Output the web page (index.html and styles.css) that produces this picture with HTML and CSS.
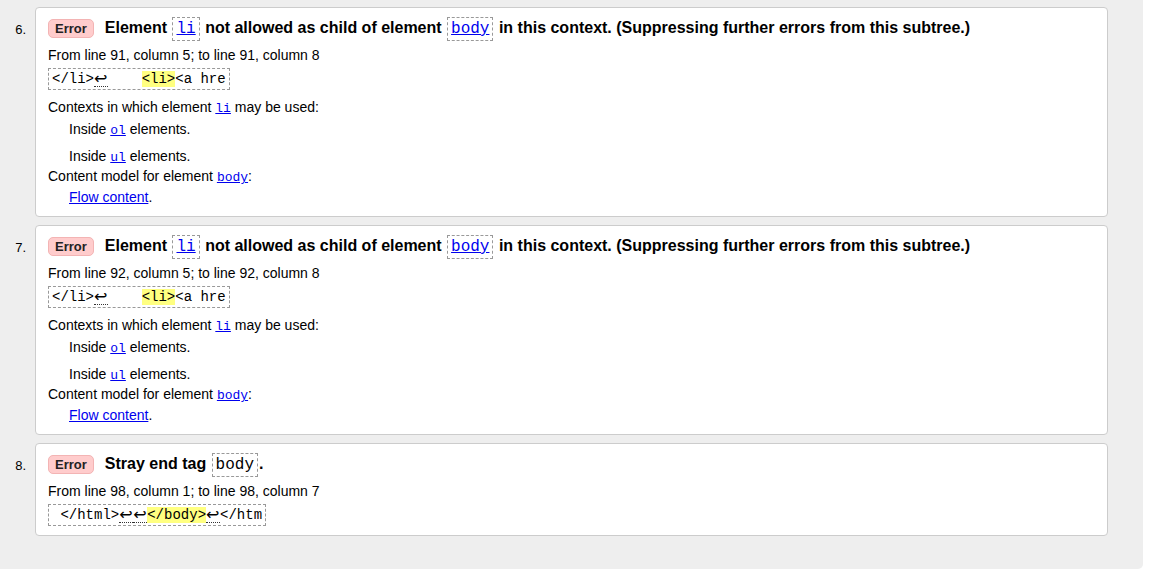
FILE: index.html
```html
<!DOCTYPE html>
<html lang="en">
<head>
<meta charset="utf-8">
<title>Validation messages</title>
<link rel="stylesheet" href="styles.css">
</head>
<body>
<div class="page">
  <ol class="messages">
    <li class="msg">
      <span class="num">6.</span>
      <div class="card">
        <p class="title"><strong class="badge">Error</strong><span class="desc">Element <code class="tag"><a href="#">li</a></code> not allowed as child of element <code class="tag"><a href="#">body</a></code> in this context. (Suppressing further errors from this subtree.)</span></p>
        <p class="loc">From line 91, column 5; to line 91, column 8</p>
        <p class="extract"><code>&lt;/li&gt;<b class="lf">↩</b>    <mark>&lt;li&gt;</mark>&lt;a hre</code></p>
        <dl class="ctx">
          <dt>Contexts in which element <a href="#"><code>li</code></a> may be used:</dt>
          <dd class="d1">Inside <a href="#"><code>ol</code></a> elements.</dd>
          <dd class="d2">Inside <a href="#"><code>ul</code></a> elements.</dd>
          <dt class="t2">Content model for element <a href="#"><code>body</code></a>:</dt>
          <dd class="d3"><a href="#">Flow content</a>.</dd>
        </dl>
      </div>
    </li>
    <li class="msg">
      <span class="num">7.</span>
      <div class="card">
        <p class="title"><strong class="badge">Error</strong><span class="desc">Element <code class="tag"><a href="#">li</a></code> not allowed as child of element <code class="tag"><a href="#">body</a></code> in this context. (Suppressing further errors from this subtree.)</span></p>
        <p class="loc">From line 92, column 5; to line 92, column 8</p>
        <p class="extract"><code>&lt;/li&gt;<b class="lf">↩</b>    <mark>&lt;li&gt;</mark>&lt;a hre</code></p>
        <dl class="ctx">
          <dt>Contexts in which element <a href="#"><code>li</code></a> may be used:</dt>
          <dd class="d1">Inside <a href="#"><code>ol</code></a> elements.</dd>
          <dd class="d2">Inside <a href="#"><code>ul</code></a> elements.</dd>
          <dt class="t2">Content model for element <a href="#"><code>body</code></a>:</dt>
          <dd class="d3"><a href="#">Flow content</a>.</dd>
        </dl>
      </div>
    </li>
    <li class="msg">
      <span class="num">8.</span>
      <div class="card">
        <p class="title"><strong class="badge">Error</strong><span class="desc">Stray end tag <code class="tag">body</code>.</span></p>
        <p class="loc">From line 98, column 1; to line 98, column 7</p>
        <p class="extract last"><code> &lt;/html&gt;<b class="lf">↩</b><b class="lf">↩</b><mark>&lt;/body&gt;</mark><b class="lf">↩</b>&lt;/htm</code></p>
      </div>
    </li>
  </ol>
</div>
</body>
</html>
```
FILE: styles.css
```css
* { box-sizing: border-box; }
html, body { margin: 0; padding: 0; background: #fff; }
body {
  font-family: "Liberation Sans", Arial, Helvetica, sans-serif;
  font-size: 14px;
  color: #000;
}
a { color: #0000ee; }
.page {
  width: 1143px;
  height: 569px;
  background: #eee;
  border-bottom-right-radius: 5px;
  padding: 7px 35px 0 0;
}
.messages {
  list-style: none;
  margin: 0;
  padding: 0;
  display: flex;
  flex-direction: column;
  gap: 8px;
}
.msg { display: flex; align-items: flex-start; }
.num {
  flex: 0 0 35px;
  padding: 15px 9px 0 0;
  text-align: right;
  font-size: 13px;
  line-height: 16px;
}
.card {
  flex: 1;
  background: #fff;
  border: 1px solid #ccc;
  border-radius: 4px;
  padding: 8px 12px 8px;
}
.title {
  margin: 0;
  display: flex;
  align-items: center;
  height: 24px;
}
.badge {
  display: inline-block;
  background: #fcc;
  border: 1px solid #f3b4b4;
  border-radius: 5px;
  color: #222;
  font-size: 13px;
  font-weight: bold;
  line-height: 17px;
  padding: 0 6px;
  margin-right: 11px;
}
.desc {
  font-size: 16px;
  font-weight: bold;
  line-height: 24px;
  white-space: nowrap;
  padding-top: 1px;
}
.tag {
  display: inline-block;
  font-family: "Liberation Mono", "Courier New", monospace;
  font-size: 16px;
  font-weight: normal;
  line-height: 16px;
  padding: 3px 3px;
  border: 1px dashed #999;
  margin: 0 1px;
}
.loc { margin: 7px 0 0; line-height: 16px; height: 16px; }
.extract { margin: 5px 0 0; line-height: 22px; height: 22px; }
.extract.last { margin-bottom: 1px; }
.extract code {
  display: inline-block;
  font-family: "Liberation Mono", "Courier New", monospace;
  font-size: 14px;
  line-height: 16px;
  height: 22px;
  padding: 2px 3px 2px 3px;
  border: 1px dashed #999;
  white-space: pre;
  vertical-align: top;
}
.extract mark { background: #ffff80; color: #000; }
.lf {
  display: inline-block;
  width: 14px;
  font-family: "DejaVu Sans", sans-serif;
  font-weight: normal;
  font-size: 16px;
  line-height: 15px;
  height: 16px;
  border-bottom: 1px dotted #333;
  vertical-align: top;
}
.ctx { margin: 9px 0 3px; }
.ctx dt, .ctx dd { line-height: 16px; height: 16px; }
.ctx dd { margin-left: 21px; }
.ctx code {
  font-family: "Liberation Mono", "Courier New", monospace;
  font-size: 13px;
  line-height: 1;
}
.ctx .d1 { margin-top: 6px; }
.ctx .d2 { margin-top: 11px; }
.ctx .t2 { margin-top: 4px; }
.ctx .d3 { margin-top: 5px; }
```
